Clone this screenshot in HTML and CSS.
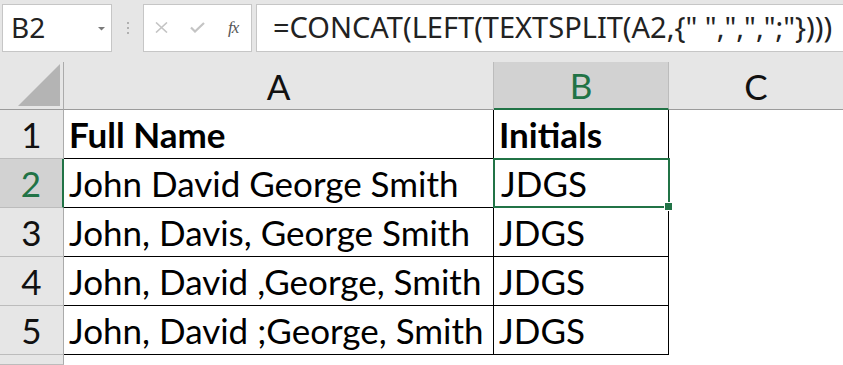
FILE: index.html
```html
<!DOCTYPE html>
<html lang="en">
<head>
    <meta charset="UTF-8" />
    <meta name="viewport" content="width=device-width, initial-scale=1" />
    <title>TEXTSPLIT initials</title>
    <link rel="stylesheet" href="styles.css">
</head>
<body>
    <div class="toolbar">
        <div class="name-box">
            <span>B2</span>
            <svg class="caret" width="7" height="4" viewBox="0 0 7 4"><polygon points="0,0 7,0 3.5,3.5" fill="#7a7a7a"/></svg>
        </div>
        <div class="grip"><i></i><i></i><i></i></div>
        <div class="fx-box">
            <svg class="fx-icon" width="13" height="11" viewBox="0 0 13 11"><path d="M1 0.5 L12 10.5 M12 0.5 L1 10.5" stroke="#c4c4c4" stroke-width="1.6" fill="none"/></svg>
            <svg class="fx-icon" width="15" height="11" viewBox="0 0 15 11"><path d="M1 5.5 L5 9.5 L14 1" stroke="#c4c4c4" stroke-width="2.2" fill="none"/></svg>
            <span class="fx-label">fx</span>
        </div>
        <div class="formula">=CONCAT(LEFT(TEXTSPLIT(A2,{" ",",",";"})))</div>
    </div>

    <div class="sheet">
        <div class="corner">
            <svg width="42" height="42" viewBox="0 0 42 42"><polygon points="42,0 42,42 0,42" fill="#b4b4b4"/></svg>
        </div>
        <div class="col-head">A</div>
        <div class="col-head active">B</div>
        <div class="col-head last">C</div>

        <div class="row-head">1</div>
        <div class="cell bold">Full Name</div>
        <div class="cell bold">Initials</div>
        <div class="empty"></div>

        <div class="row-head active">2</div>
        <div class="cell">John David George Smith</div>
        <div class="cell selected">JDGS</div>
        <div class="empty"></div>

        <div class="row-head">3</div>
        <div class="cell">John, Davis, George Smith</div>
        <div class="cell">JDGS</div>
        <div class="empty"></div>

        <div class="row-head">4</div>
        <div class="cell">John, David ,George, Smith</div>
        <div class="cell">JDGS</div>
        <div class="empty"></div>

        <div class="row-head">5</div>
        <div class="cell">John, David ;George, Smith</div>
        <div class="cell">JDGS</div>
        <div class="empty"></div>

        <div class="row-head"></div>
        <div class="empty"></div>
        <div class="empty"></div>
        <div class="empty"></div>
    </div>
</body>
</html>
```

FILE: styles.css
```css
* {
    box-sizing: border-box;
}
body {
    margin: 0;
    width: 843px;
    height: 365px;
    overflow: hidden;
    background: #fff;
    font-family: Lato, "Open Sans", sans-serif;
}

/* formula bar */
.toolbar {
    display: flex;
    align-items: flex-start;
    height: 62px;
    padding: 4px 0 0 2px;
    background: #e6e6e6;
}
.name-box {
    display: flex;
    align-items: center;
    justify-content: space-between;
    width: 110px;
    height: 48px;
    padding: 0 6px 2px 8px;
    background: #fff;
    border: 1px solid #c6c6c6;
    font-family: "Noto Sans", sans-serif;
    font-size: 28px;
    color: #222;
}
.caret {
    margin-top: 4px;
}
.grip {
    display: flex;
    flex-direction: column;
    align-items: center;
    justify-content: center;
    gap: 3px;
    width: 31px;
    height: 48px;
}
.grip i {
    width: 2px;
    height: 2px;
    background: #b0b0b0;
}
.fx-box {
    display: flex;
    align-items: center;
    gap: 22px;
    width: 109px;
    height: 48px;
    padding: 0 0 1px 11px;
    background: #fff;
    border: 1px solid #c6c6c6;
}
.fx-label {
    color: #555;
    font-family: "Liberation Serif", serif;
    font-style: italic;
    font-size: 17px;
    letter-spacing: -1px;
    margin-left: 1px;
}
.formula {
    flex: 1;
    height: 48px;
    margin-left: 4px;
    margin-right: -4px;
    padding-left: 16px;
    background: #fff;
    border: 1px solid #c6c6c6;
    font-family: "Noto Sans", sans-serif;
    font-size: 29px;
    line-height: 44px;
    color: #222;
    white-space: nowrap;
}

/* grid */
.sheet {
    display: grid;
    grid-template-columns: 64px 430px 175px 1fr;
    grid-template-rows: 48px repeat(5, 49px) 1fr;
    height: 303px;
    font-size: 35px;
    color: #000;
}
.corner {
    display: flex;
    align-items: flex-end;
    justify-content: flex-end;
    padding: 0 3px 3px 0;
    background: #e6e6e6;
    border-right: 1px solid #ababab;
    border-bottom: 1px solid #9b9b9b;
}
.col-head {
    display: flex;
    align-items: center;
    justify-content: center;
    background: #e6e6e6;
    border-right: 1px solid #bcbcbc;
    border-bottom: 1px solid #9b9b9b;
    color: #111;
}
.col-head.last {
    border-right: none;
}
.col-head.active {
    background: #d2d2d2;
    color: #217346;
    border-bottom: 2px solid #217346;
}
.row-head {
    display: flex;
    align-items: center;
    justify-content: center;
    background: #e6e6e6;
    border-right: 1px solid #ababab;
    border-bottom: 1px solid #bcbcbc;
    color: #111;
}
.row-head.active {
    background: #d2d2d2;
    color: #217346;
    border-right: 2px solid #217346;
}
.cell {
    display: flex;
    align-items: center;
    padding-left: 5px;
    border-right: 1px solid #000;
    border-bottom: 1px solid #000;
    white-space: nowrap;
}
.bold {
    font-weight: bold;
}
.cell.selected {
    position: relative;
    border: 2px solid #217346;
    margin: -1px -1px 0 -1px;
    padding-left: 6px;
}
.cell.selected::after {
    content: "";
    position: absolute;
    right: -5px;
    bottom: -5px;
    width: 7px;
    height: 7px;
    background: #217346;
    border: 1px solid #fff;
}
.empty {
    background: #fff;
}
```
